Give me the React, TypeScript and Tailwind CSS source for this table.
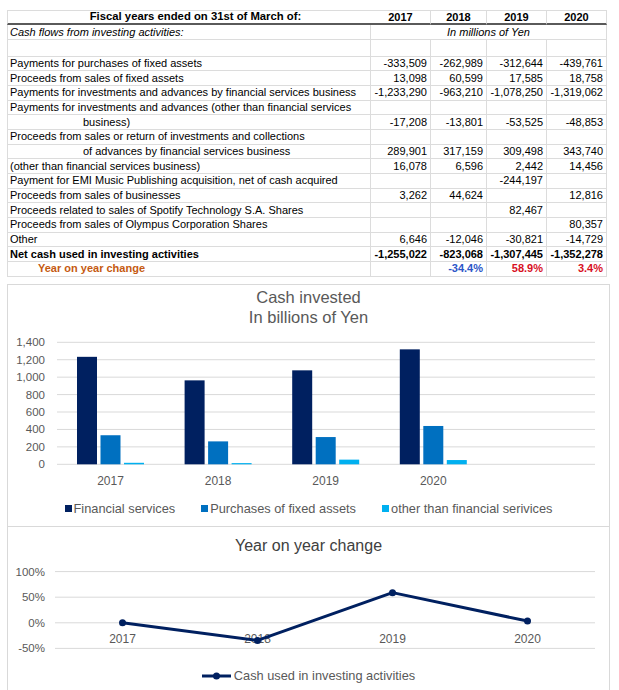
const years = ["2017", "2018", "2019", "2020"];

type Row = { label: string; v: string[]; indent?: boolean; bold?: boolean };

const rows: Row[] = [
  { label: "Payments for purchases of fixed assets", v: ["-333,509", "-262,989", "-312,644", "-439,761"] },
  { label: "Proceeds from sales of fixed assets", v: ["13,098", "60,599", "17,585", "18,758"] },
  { label: "Payments for investments and advances by financial services business", v: ["-1,233,290", "-963,210", "-1,078,250", "-1,319,062"] },
  { label: "Payments for investments and advances (other than financial services", v: ["", "", "", ""] },
  { label: "business)", indent: true, v: ["-17,208", "-13,801", "-53,525", "-48,853"] },
  { label: "Proceeds from sales or return of investments and collections", v: ["", "", "", ""] },
  { label: "of advances by financial services business", indent: true, v: ["289,901", "317,159", "309,498", "343,740"] },
  { label: "(other than financial services business)", v: ["16,078", "6,596", "2,442", "14,456"] },
  { label: "Payment for EMI Music Publishing acquisition, net of cash acquired", v: ["", "", "-244,197", ""] },
  { label: "Proceeds from sales of businesses", v: ["3,262", "44,624", "", "12,816"] },
  { label: "Proceeds related to sales of Spotify Technology S.A. Shares", v: ["", "", "82,467", ""] },
  { label: "Proceeds from sales of Olympus Corporation Shares", v: ["", "", "", "80,357"] },
  { label: "Other", v: ["6,646", "-12,046", "-30,821", "-14,729"] },
  { label: "Net cash used in investing activities", bold: true, v: ["-1,255,022", "-823,068", "-1,307,445", "-1,352,278"] },
];

const invested = [
  { year: "2017", fs: 1233.29, fa: 333.509, other: 17.208 },
  { year: "2018", fs: 963.21, fa: 262.989, other: 13.801 },
  { year: "2019", fs: 1078.25, fa: 312.644, other: 53.525 },
  { year: "2020", fs: 1319.062, fa: 439.761, other: 48.853 },
];

const yoy = [0, -34.4, 58.9, 3.4];

const grid = "grid grid-cols-[364px_60px_56px_60px_60px]";
const cell = "border-r border-b border-r-[#dcdcdc] border-b-[#dcdcdc] overflow-visible whitespace-nowrap";

function CashChart() {
  const base = 464.3;
  const k = 122 / 1400;
  const ticks = [0, 200, 400, 600, 800, 1000, 1200, 1400];
  return (
    <svg width={601} height={165} viewBox="8 327 601 165" className="block">
      {ticks.map((t) => (
        <g key={t}>
          <line x1={57} x2={595} y1={base - t * k} y2={base - t * k} stroke="#d9d9d9" strokeWidth={1} />
          <text x={45} y={base - t * k + 4} textAnchor="end" fontSize={11.5} fill="#595959" fontFamily="Liberation Sans, Arial, sans-serif">
            {t.toLocaleString("en-US")}
          </text>
        </g>
      ))}
      {invested.map((d, i) => {
        const c = 110.5 + i * 107.6;
        return (
          <g key={d.year}>
            <rect x={c - 33.5} y={base - d.fs * k} width={20} height={d.fs * k} fill="#002060" />
            <rect x={c - 10} y={base - d.fa * k} width={20} height={d.fa * k} fill="#0070c0" />
            <rect x={c + 13.5} y={base - d.other * k} width={20} height={d.other * k} fill="#00b0f0" />
            <text x={c} y={485} textAnchor="middle" fontSize={12} fill="#595959" fontFamily="Liberation Sans, Arial, sans-serif">
              {d.year}
            </text>
          </g>
        );
      })}
    </svg>
  );
}

function YoyChart() {
  const zero = 622.8;
  const k = 25.6 / 50;
  const ticks = [100, 50, 0, -50];
  const pts = yoy.map((v, i) => [55 + 135 * (i + 0.5), zero - v * k]);
  return (
    <svg width={601} height={104} viewBox="8 556 601 104" className="block">
      {ticks.map((t) => (
        <g key={t}>
          <line x1={55} x2={595} y1={zero - t * k} y2={zero - t * k} stroke="#d9d9d9" strokeWidth={1} />
          <text x={45} y={zero - t * k + 4} textAnchor="end" fontSize={11.5} fill="#595959" fontFamily="Liberation Sans, Arial, sans-serif">
            {t}%
          </text>
        </g>
      ))}
      {years.map((y, i) => (
        <text key={y} x={55 + 135 * (i + 0.5)} y={643} textAnchor="middle" fontSize={12} fill="#595959" fontFamily="Liberation Sans, Arial, sans-serif">
          {y}
        </text>
      ))}
      <polyline points={pts.map((p) => p.join(",")).join(" ")} fill="none" stroke="#002060" strokeWidth={3} strokeLinejoin="round" />
      {pts.map((p, i) => (
        <circle key={i} cx={p[0]} cy={p[1]} r={3.5} fill="#002060" />
      ))}
    </svg>
  );
}

function LegendSwatch({ color, label }: { color: string; label: string }) {
  return (
    <div className="flex items-center gap-[2px]">
      <span className="h-[7px] w-[7px]" style={{ backgroundColor: color }} />
      <span>{label}</span>
    </div>
  );
}

export default function App() {
  return (
    <div className="h-[690px] w-[619px] overflow-hidden bg-white pt-[10px] font-['Liberation_Sans',Arial,sans-serif] text-black">
      <div className="ml-[7px] w-[600px] text-[11px] leading-none">
        {/* header */}
        <div className={`${grid} h-[15px] border-t border-[#dcdcdc]`}>
          <div className="flex items-center justify-center border-b-2 border-l border-b-[#5a5a5a] border-l-[#dcdcdc] pl-[12px] text-[11.3px] font-bold">
            Fiscal years ended on 31st of March of:
          </div>
          {years.map((y) => (
            <div key={y} className="flex items-center justify-center border-r border-b-2 border-r-[#dcdcdc] border-b-[#5a5a5a] font-bold">
              {y}
            </div>
          ))}
        </div>
        <div className={`${grid} h-[15px]`}>
          <div className={`${cell} flex items-center border-l border-l-[#dcdcdc] pl-[2px] italic`}>Cash flows from investing activities:</div>
          <div className={`${cell} col-span-4 flex items-center justify-center italic`}>In millions of Yen</div>
        </div>
        <div className={`${grid} h-[16.5px]`}>
          <div className={`${cell} border-l border-l-[#dcdcdc]`} />
          {years.map((y) => (
            <div key={y} className={cell} />
          ))}
        </div>
        {rows.map((r) => {
          const bottom = r.bold ? "border-b-[1.5px] border-b-[#1a1a1a]" : "";
          return (
            <div key={r.label} className={`${grid} h-[14.7px] ${r.bold ? "font-bold" : ""}`}>
              <div className={`${cell} ${bottom} flex items-center border-l border-l-[#dcdcdc] ${r.indent ? "pl-[75px]" : "pl-[2px]"}`}>
                {r.label}
              </div>
              {r.v.map((v, i) => (
                <div key={i} className={`${cell} ${bottom} flex items-center justify-end pr-[3px]`}>
                  {v}
                </div>
              ))}
            </div>
          );
        })}
        <div className={`${grid} h-[14.7px] font-bold`}>
          <div className={`${cell} flex items-center border-l border-l-[#dcdcdc] border-b-[1.5px] border-b-[#1a1a1a] pl-[30px] text-[#c55a11]`}>
            Year on year change
          </div>
          <div className={`${cell} border-b-[1.5px] border-b-[#1a1a1a]`} />
          <div className={`${cell} flex items-center justify-end border-b-[1.5px] border-b-[#1a1a1a] pr-[3px] text-[#2a55c8]`}>-34.4%</div>
          <div className={`${cell} flex items-center justify-end border-b-[1.5px] border-b-[#1a1a1a] pr-[3px] text-[#d8101e]`}>58.9%</div>
          <div className={`${cell} flex items-center justify-end border-b-[1.5px] border-b-[#1a1a1a] pr-[3px] text-[#d8101e]`}>3.4%</div>
        </div>
      </div>

      {/* charts */}
      <div className="ml-[7px] mt-[7px] w-[603px]">
        <div className="h-[242px] border-x border-t border-[#d9d9d9]">
          <div className="pt-[2px] text-center text-[16.5px] leading-[20px] text-[#595959]">
            <div>Cash invested</div>
            <div>In billions of Yen</div>
          </div>
          <CashChart />
          <div className="flex h-[32px] items-center justify-center gap-[26px] pt-[2px] text-[12.8px] text-[#595959]">
            <LegendSwatch color="#002060" label="Financial services" />
            <LegendSwatch color="#0070c0" label="Purchases of fixed assets" />
            <LegendSwatch color="#00b0f0" label="other than financial serivices" />
          </div>
        </div>
        <div className="h-[164px] border-x border-t border-[#d9d9d9]">
          <div className="pt-[9px] text-center text-[16px] leading-[20px] text-[#404040]">Year on year change</div>
          <YoyChart />
          <div className="flex h-[30px] items-center justify-center pt-[2px] text-[12.8px] text-[#595959]">
            <svg width={29} height={8} viewBox="0 0 29 8" className="mr-[3px]">
              <line x1={0} x2={29} y1={4} y2={4} stroke="#002060" strokeWidth={3} />
              <circle cx={14.5} cy={4} r={3.5} fill="#002060" />
            </svg>
            <span>Cash used in investing activities</span>
          </div>
        </div>
      </div>
    </div>
  );
}
